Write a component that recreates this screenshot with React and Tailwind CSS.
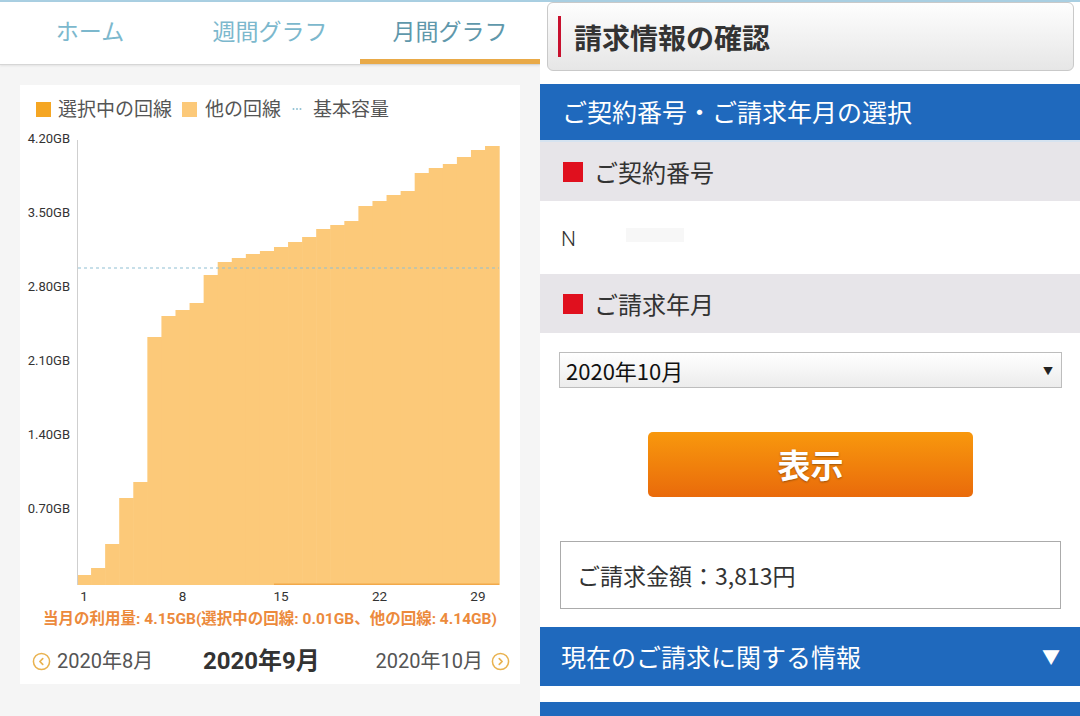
import React from 'react';

const heights = [10, 17, 41, 87, 103, 248, 269, 275, 282, 310, 323, 327, 331, 334, 338, 343, 348, 356, 360, 364, 379, 384, 390, 394, 412, 417, 421, 428, 435, 439];
const yLabels = [
    { t: '4.20GB', y: 12 },
    { t: '3.50GB', y: 86 },
    { t: '2.80GB', y: 160 },
    { t: '2.10GB', y: 234 },
    { t: '1.40GB', y: 308 },
    { t: '0.70GB', y: 382 },
];
const xLabels = [1, 8, 15, 22, 29];
const DAY = 14.07;

const Chevron = ({ dir }) => (
    <svg width="19" height="19" viewBox="0 0 20 20">
        <circle cx="10" cy="10" r="8.5" fill="none" stroke="#e9b24f" strokeWidth="1.6" />
        {dir === 'left' ? (
            <path d="M11.3 7 L8.3 10 L11.3 13" fill="none" stroke="#e9b24f" strokeWidth="1.8" strokeLinecap="round" strokeLinejoin="round" />
        ) : (
            <path d="M8.7 7 L11.7 10 L8.7 13" fill="none" stroke="#e9b24f" strokeWidth="1.8" strokeLinecap="round" strokeLinejoin="round" />
        )}
    </svg>
);

const UsageChart = () => (
    <svg width="499" height="477" className="block">
        {heights.map((h, i) => (
            <rect key={i} x={57 + i * DAY} y={457 - h} width={DAY + 0.6} height={h} fill="#fcc979" />
        ))}
        <rect x={57 + 14 * DAY} y={455.5} width={16 * DAY} height={1.5} fill="#f2a94a" />
        <line x1="57.5" y1="12" x2="57.5" y2="457" stroke="#cfcfcf" strokeWidth="1" />
        <line x1="58" y1="140" x2="479" y2="140" stroke="#8fc0d3" strokeWidth="1.2" strokeDasharray="3 3" />
        {yLabels.map((l) => (
            <text key={l.t} x="50" y={l.y} textAnchor="end" dominantBaseline="middle" fontSize="13" fill="#333" fontFamily="Roboto, sans-serif">
                {l.t}
            </text>
        ))}
        {xLabels.map((d) => (
            <text key={d} x={57 + (d - 1) * DAY + 7} y="469" textAnchor="middle" dominantBaseline="middle" fontSize="13.5" fill="#333" fontFamily="Roboto, sans-serif">
                {d}
            </text>
        ))}
    </svg>
);

const GraphPanel = () => (
    <div className="w-[540px] h-[716px] bg-[#f5f5f5] flex flex-col" style={{ fontFamily: 'Roboto, "Noto Sans CJK JP", sans-serif' }}>
        <div className="h-[2px] bg-[#a9cfe2]" />
        <div className="h-[63px] bg-white flex border-b border-[#d6d6d6] shadow-[0_1px_2px_rgba(0,0,0,0.08)]">
            <div className="flex-1 flex items-center justify-center pt-[6px] text-[23px] text-[#7cb8cd] border-b-[5px] border-transparent">ホーム</div>
            <div className="flex-1 flex items-center justify-center pt-[6px] text-[23px] text-[#7cb8cd] border-b-[5px] border-transparent">週間グラフ</div>
            <div className="flex-1 flex items-center justify-center pt-[6px] text-[23px] text-[#5f98ab] border-b-[5px] border-[#e9aa48]">月間グラフ</div>
        </div>
        <div className="mx-[20px] mt-[20px] bg-white pt-[12px] pb-[8px]">
            <div className="flex items-center h-[24px] pl-[16px] text-[19px] text-[#555] leading-none">
                <span className="w-[15px] h-[15px] bg-[#f5a623] mr-[7px]" />
                <span>選択中の回線</span>
                <span className="w-[15px] h-[15px] bg-[#fcc979] ml-[10px] mr-[8px]" />
                <span>他の回線</span>
                <svg width="10" height="4" viewBox="0 0 10 4" className="ml-[11px] mr-[11px]">
                    <circle cx="1.5" cy="2" r="1" fill="#8fc0d3" />
                    <circle cx="5" cy="2" r="1" fill="#8fc0d3" />
                    <circle cx="8.5" cy="2" r="1" fill="#8fc0d3" />
                </svg>
                <span>基本容量</span>
            </div>
            <div className="mt-[7px]">
                <UsageChart />
            </div>
            <div className="mt-[5px] h-[20px] flex items-center justify-center text-[15.5px] font-bold text-[#ec8a3c] whitespace-nowrap">
                当月の利用量: 4.15GB(選択中の回線: 0.01GB、他の回線: 4.14GB)
            </div>
            <div className="mt-[16px] h-[30px] flex items-center justify-between pl-[12px] pr-[10px]">
                <div className="flex items-center gap-[6px] text-[20px] text-[#555]">
                    <Chevron dir="left" />
                    <span>2020年8月</span>
                </div>
                <div className="text-[24px] font-bold text-[#333] pr-[6px]">2020年9月</div>
                <div className="flex items-center gap-[8px] text-[20px] text-[#555]">
                    <span>2020年10月</span>
                    <Chevron dir="right" />
                </div>
            </div>
        </div>
    </div>
);

const SectionLabel = ({ children }) => (
    <div className="h-[59px] bg-[#e7e5e9] flex items-center pl-[23px]">
        <span className="w-[20px] h-[20px] bg-[#e0101e] mr-[11px]" />
        <span className="text-[24px] text-[#333]">{children}</span>
    </div>
);

const BillingPanel = () => (
    <div className="w-[540px] h-[716px] bg-white flex flex-col overflow-hidden" style={{ fontFamily: '"Noto Sans CJK JP", sans-serif' }}>
        <div className="h-[2px] bg-[#a9cfe2]" />
        <div className="mx-[7px] mr-[6px] h-[69px] rounded-md border border-[#c9c9c9] bg-gradient-to-b from-[#fefefe] to-[#e6e6e6] flex items-center pl-[10px]">
            <span className="w-[3px] h-[41px] bg-[#c8102e] mr-[13px]" />
            <span className="text-[28px] font-bold text-[#333]">請求情報の確認</span>
        </div>
        <div className="mt-[13px] h-[56px] bg-[#1f69bd] flex items-center pl-[22px] text-[25px] text-white">
            ご契約番号・ご請求年月の選択
        </div>
        <div className="h-[2px] bg-[#d6e3f0]" />
        <SectionLabel>ご契約番号</SectionLabel>
        <div className="h-[73px] flex items-center pl-[21px] pt-[4px]">
            <span className="text-[21px] text-[#333]" style={{ fontFamily: 'Roboto, sans-serif', fontWeight: 300 }}>N</span>
            <span className="ml-[50px] mb-[10px] w-[58px] h-[14px] bg-[#f7f7f7]" />
        </div>
        <SectionLabel>ご請求年月</SectionLabel>
        <div className="mt-[19px] mx-[19px] mr-[18px] h-[36px] border border-[#bdbdbd] bg-gradient-to-b from-white to-[#ececec] flex items-center justify-between pl-[6px] pr-[8px]">
            <span className="text-[22px] text-[#111]">2020年10月</span>
            <span className="text-[10px] text-[#222]">▼</span>
        </div>
        <div className="mt-[44px] flex justify-center pl-[1px]">
            <button className="w-[325px] h-[65px] rounded-[5px] bg-gradient-to-b from-[#f8980d] to-[#e96a0b] text-white text-[33px] font-bold [text-shadow:0_1px_2px_rgba(0,0,0,0.35)]">
                表示
            </button>
        </div>
        <div className="mt-[44px] mx-[20px] mr-[19px] h-[68px] border border-[#ababab] flex items-center pl-[16px] text-[23px] text-[#333]">
            ご請求金額：3,813円
        </div>
        <div className="mt-[18px] h-[59px] bg-[#1f69bd] flex items-center justify-between pl-[21px] pr-[20px] text-white">
            <span className="text-[25px]">現在のご請求に関する情報</span>
            <span className="text-[18px]">▼</span>
        </div>
        <div className="h-[16px] bg-white" />
        <div className="flex-1 bg-[#1f69bd]" />
    </div>
);

const App = () => {
    return (
        <div className="w-[1080px] h-[716px] flex overflow-hidden">
            <GraphPanel />
            <BillingPanel />
        </div>
    );
};

export default App;
